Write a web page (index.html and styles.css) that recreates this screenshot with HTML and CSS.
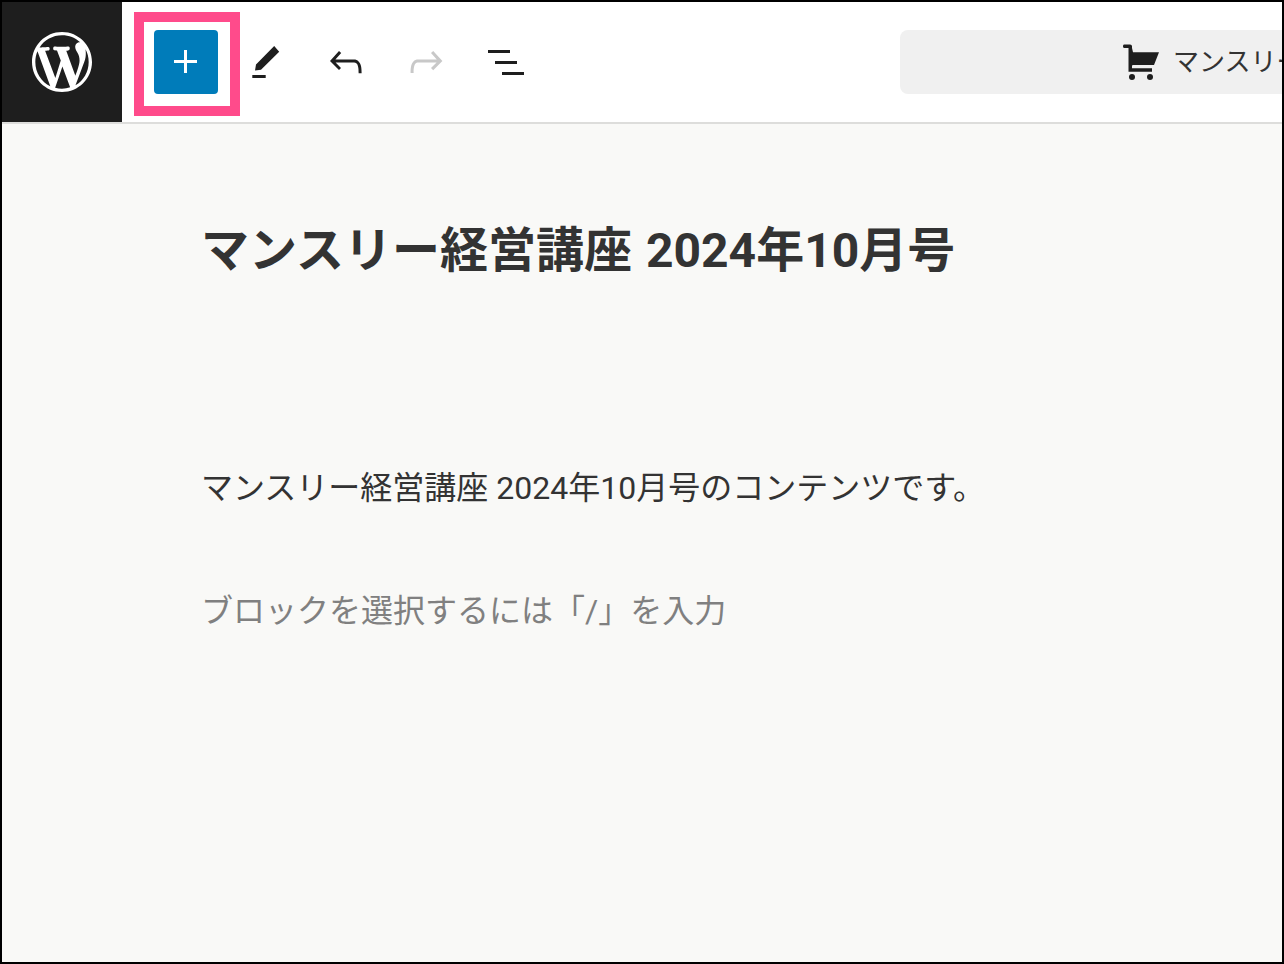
FILE: index.html
```html
<!DOCTYPE html>
<html lang="ja">
<head>
<meta charset="utf-8">
<title>マンスリー経営講座 2024年10月号</title>
<link rel="stylesheet" href="styles.css">
</head>
<body>
<div class="frame">
  <header class="topbar">
    <div class="logo">
      <svg class="logo-svg" viewBox="0 0 20 20"><path fill="#fff" d="M20 10c0-5.51-4.49-10-10-10C4.48 0 0 4.49 0 10c0 5.52 4.48 10 10 10 5.51 0 10-4.48 10-10zM7.78 15.37L4.37 6.22c.55-.02 1.17-.08 1.17-.08.5-.06.44-1.13-.06-1.11 0 0-1.45.11-2.37.11-.18 0-.37 0-.58-.01C4.12 2.69 6.87 1.11 10 1.11c2.33 0 4.45.87 6.05 2.34-.68-.11-1.65.39-1.65 1.58 0 .74.45 1.36.9 2.1.35.61.55 1.36.55 2.46 0 1.49-1.4 5-1.4 5l-3.03-8.37c.54-.02.82-.17.82-.17.5-.05.44-1.25-.06-1.22 0 0-1.44.12-2.38.12-.87 0-2.33-.12-2.33-.12-.5-.03-.56 1.2-.06 1.22l.92.08 1.26 3.41zM17.41 10c.24-.64.74-1.87.43-4.25.7 1.29 1.05 2.71 1.05 4.25 0 3.29-1.73 6.24-4.4 7.78.97-2.59 1.94-5.2 2.92-7.78zM6.1 18.09C3.12 16.65 1.11 13.53 1.11 10c0-1.3.23-2.48.72-3.59C3.25 10.3 4.67 14.2 6.1 18.09zm4.03-6.63l2.58 6.98c-.86.29-1.76.45-2.71.45-.79 0-1.57-.11-2.29-.33.81-2.38 1.62-4.74 2.42-7.1z"/></svg>
    </div>
    <div class="highlight">
      <button class="add-btn" type="button" aria-label="追加">
        <svg class="icon" viewBox="0 0 24 24"><path fill="#fff" d="M11 12.5V17.5H12.5V12.5H17.5V11H12.5V6H11V11H6V12.5H11Z"/></svg>
      </button>
    </div>
    <div class="tools">
      <svg class="icon" viewBox="0 0 24 24"><path fill="#1e1e1e" d="M5.150 20h6.700v-1.500H5.150V20zM6.500 16.300 7 13.300 16.100 4 18.600 6.850 9.500 15.900z"/></svg>
      <svg class="icon tool-gap" viewBox="0 0 24 24"><path fill="#1e1e1e" d="M18.3 11.700c-.6-.6-1.400-.9-2.300-.9H6.700l2.900-3.300-1.100-1-4.500 5L8.500 16l1-1-2.700-2.700H16c.5 0 .9.2 1.300.5 1 1 1 3.400 1 4.500v.3h1.500v-.2c0-1.500 0-4.300-1.500-5.700z"/></svg>
      <svg class="icon tool-gap" viewBox="0 0 24 24"><path fill="#c8c8c8" d="M15.600 6.500l-1.100 1 2.900 3.300H8c-.9 0-1.700.3-2.300.9-1.400 1.500-1.400 4.200-1.400 5.600v.2h1.500v-.3c0-1.100 0-3.500 1-4.500.3-.3.7-.5 1.300-.5h9.200L14.500 15l1.100 1.100 4.600-4.600-4.600-5z"/></svg>
      <svg class="icon tool-gap" viewBox="0 0 24 24"><path fill="#1e1e1e" d="M3 6h11v1.500H3V6zm3.500 5.500h11V13h-11v-1.500zM10 17h11v1.500H10V17z"/></svg>
    </div>
    <div class="doc-bar">
      <svg class="cart" viewBox="0 0 36 36"><path fill="#1e1e1e" d="M1.500 .5H7c1.200 0 2 .8 2 2V4L10 8.300H36L31 21H10L9 21.500V24.300H29V27.700H5.500V4H1.500C.5 4 0 3.200 0 2.200S.5 .5 1.500 .5z"/><circle fill="#1e1e1e" cx="9" cy="33" r="3"/><circle fill="#1e1e1e" cx="27" cy="33" r="3"/></svg>
      <span class="doc-title">マンスリー経営講座 2024年10月号</span>
    </div>
  </header>
  <main class="editor">
    <h1 class="post-title">マンスリー経営講座 2024年10月号</h1>
    <p class="para">マンスリー経営講座 2024年10月号のコンテンツです。</p>
    <p class="para placeholder">ブロックを選択するには「/」を入力</p>
  </main>
</div>
</body>
</html>
```
FILE: styles.css
```css
* { box-sizing: border-box; }
html, body { margin: 0; padding: 0; }
body {
  font-family: Roboto, "Noto Sans CJK JP", sans-serif;
  color: #333;
}
.frame {
  width: 1284px;
  height: 964px;
  border: 2px solid #000;
  overflow: hidden;
  background: #f9f9f7;
}
.topbar {
  display: flex;
  align-items: center;
  height: 122px;
  background: #fff;
  border-bottom: 2px solid #dddddb;
}
.logo {
  flex: none;
  width: 120px;
  height: 120px;
  background: #1e1e1e;
  display: flex;
  align-items: center;
  justify-content: center;
}
.logo-svg { width: 60px; height: 60px; display: block; }
.highlight {
  flex: none;
  align-self: flex-start;
  margin: 10px 0 0 12px;
  width: 106px;
  height: 104px;
  border: 10px solid #ff4b8b;
  padding: 8px 12px 12px 10px;
  background: #fff;
}
.add-btn {
  width: 64px;
  height: 64px;
  border: 0;
  padding: 0;
  border-radius: 4px;
  background: #007cba;
  display: flex;
  align-items: center;
  justify-content: center;
}
.icon { width: 48px; height: 48px; display: block; flex: none; }
.tools {
  flex: none;
  display: flex;
  align-items: center;
  margin-left: 2px;
}
.tool-gap { margin-left: 32px; }
.doc-bar {
  flex: none;
  margin-left: 370px;
  width: 800px;
  height: 64px;
  border-radius: 8px;
  background: #f0f0f0;
  display: flex;
  align-items: center;
  padding-left: 223px;
  white-space: nowrap;
}
.cart { width: 36px; height: 36px; display: block; flex: none; }
.doc-title { margin: -6px 0 0 14px; font-size: 26px; }
.editor { padding: 0 0 0 199px; }
.post-title {
  margin: 97px 0 0;
  font-size: 48px;
  line-height: 60px;
  font-weight: 700;
  word-spacing: 2px;
}
.para {
  margin: 0;
  font-size: 32px;
  line-height: 48px;
  font-weight: 400;
}
.post-title + .para { margin-top: 183px; }
.placeholder { margin-top: 75px; color: #808080; }
```
